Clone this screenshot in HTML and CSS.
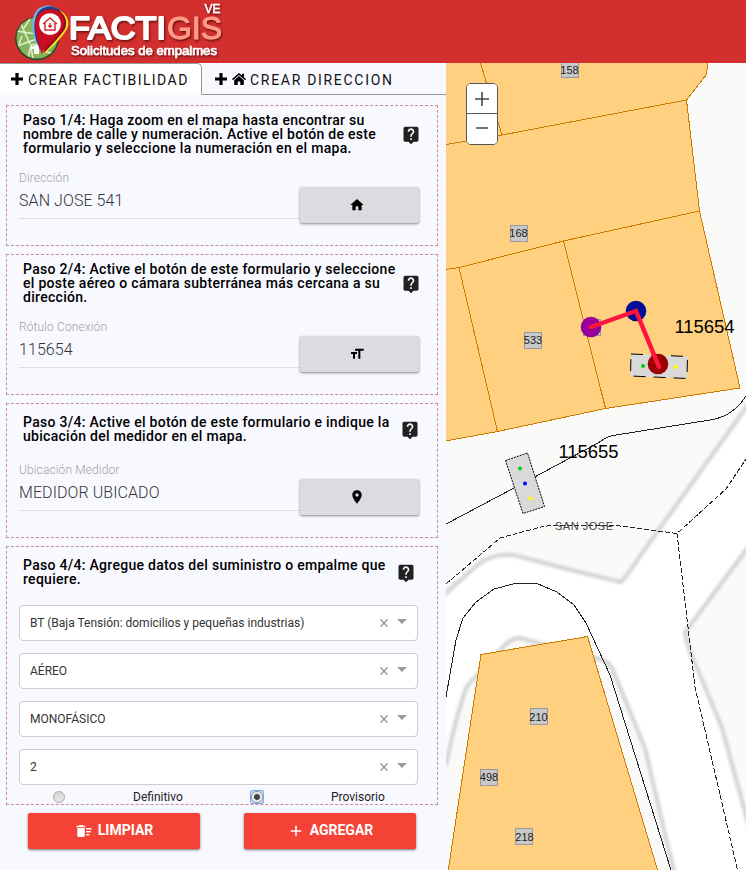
FILE: index.html
```html
<!DOCTYPE html>
<html lang="es">
<head>
<meta charset="utf-8">
<title>FACTIGIS - Solicitudes de empalmes</title>
<link rel="stylesheet" href="styles.css">
</head>
<body>
<svg class="defs" width="0" height="0" aria-hidden="true">
  <symbol id="help" viewBox="0 0 24 24"><path d="M19 2H5c-1.1 0-2 .9-2 2v14c0 1.1.9 2 2 2h4l3 3 3-3h4c1.1 0 2-.9 2-2V4c0-1.1-.9-2-2-2zm-6 16h-2v-2h2v2zm2.07-7.75l-.9.92C13.45 11.9 13 12.5 13 14h-2v-.5c0-1.1.45-2.1 1.17-2.83l1.24-1.26c.37-.36.59-.86.59-1.41 0-1.1-.9-2-2-2s-2 .9-2 2H8c0-2.21 1.79-4 4-4s4 1.79 4 4c0 .88-.36 1.68-.93 2.25z"/></symbol>
  <symbol id="plus" viewBox="0 0 12 12"><path d="M4.4 0h3.2v4.4H12v3.2H7.6V12H4.4V7.600H0V4.400h4.400z"/></symbol>
</svg>
<header class="header">
  <svg class="logo" width="240" height="63" viewBox="0 0 240 63">
    <defs>
      <filter id="shade" x="-10%" y="-10%" width="125%" height="140%"><feDropShadow dx="1" dy="1.5" stdDeviation=".8" flood-color="#400" flood-opacity=".75"/></filter>
      <clipPath id="globe"><circle cx="37" cy="38" r="20.500"/></clipPath>
    </defs>
    <circle cx="37" cy="38.500" r="22" fill="#38492a"/>
    <g clip-path="url(#globe)">
      <circle cx="37" cy="38" r="21" fill="#86b45c"/>
      <path d="M16 31l20 3M20 22l10 22M17 46l20-7M28 58l3-13 13-2M33 60l-2-14M40 50l14 4M24 28l6-9M22 36l-3 8" fill="none" stroke="#e4f0cf" stroke-width="1.500"/>
      <path d="M31 47l8-3v10h-5v-5h-3z" fill="#fff"/>
    </g>
    <path d="M37 45C31 33 30 19 37 10c6-6 16-6 22 0z" fill="#72b5e6"/>
    <path d="M43 55c9-8 19-17 24-26 4-7-1-16-8-19z" fill="#ffe91c"/>
    <path d="M40 50C33 34 33 23 37 14c6-10 19-9 24-2z" fill="#223985"/>
    <path d="M43 54c10-10 17-18 22-25 3-8 0-15-7-19z" fill="#930d1d"/>
    <path d="M41.500 54C38 42 35 32 35 24c0-18 27-20 29-3 1 11-14 20-22.500 33z" fill="#c90d22"/>
    <circle cx="50" cy="24" r="10.800" fill="#fff"/>
    <path d="M43 24l7-6 7 6M45 23v7h10v-7M48 26h4M50 23v5" fill="none" stroke="#d12c32" stroke-width="1.500"/>
    <g filter="url(#shade)">
      <text class="logo-main" x="69" y="39" textLength="97" lengthAdjust="spacingAndGlyphs">FACTI</text>
      <text class="logo-gis" x="167" y="39" textLength="55" lengthAdjust="spacingAndGlyphs">GIS</text>
      <text class="logo-sub" x="71" y="55" textLength="146" lengthAdjust="spacingAndGlyphs">Solicitudes de empalmes</text>
      <text class="logo-ve" x="204.500" y="13" textLength="16" lengthAdjust="spacingAndGlyphs">VE</text>
    </g>
  </svg>
</header>
<main class="layout">
  <div class="panel">
    <nav class="tabs">
      <div class="tab active"><svg class="plus"><use href="#plus"/></svg><span>CREAR FACTIBILIDAD</span></div>
      <div class="tab"><svg class="plus"><use href="#plus"/></svg><svg class="home" viewBox="0 0 14 12"><path d="M7 0L0 6l1 1.200L7 2.100l6 5.100L14 6 12 4.300V.8h-2v1.800zM7 3.100L2.200 7.200V12H5.700V8.400h2.600V12h3.500V7.200z"/></svg><span>CREAR DIRECCION</span></div>
    </nav>
    <section class="step">
      <div class="step-head"><h2>Paso 1/4: Haga zoom en el mapa hasta encontrar su<br>nombre de calle y numeración. Active el botón de este<br>formulario y seleccione la numeración en el mapa.</h2><svg class="help"><use href="#help"/></svg></div>
      <div class="field"><div class="input"><label>Dirección</label><div class="value">SAN JOSE 541</div></div>
        <button class="pick"><svg viewBox="0 0 24 24"><path d="M10 20v-6h4v6h5v-8h3L12 3 2 12h3v8z"/></svg></button></div>
    </section>
    <section class="step">
      <div class="step-head"><h2>Paso 2/4: Active el botón de este formulario y seleccione<br>el poste aéreo o cámara subterránea más cercana a su<br>dirección.</h2><svg class="help"><use href="#help"/></svg></div>
      <div class="field"><div class="input"><label>Rótulo Conexión</label><div class="value">115654</div></div>
        <button class="pick"><svg viewBox="0 0 24 24"><path d="M9 4v3h5v12h3V7h5V4H9zm-6 8h3v7h3v-7h3V9H3v3z"/></svg></button></div>
    </section>
    <section class="step step3">
      <div class="step-head"><h2>Paso 3/4: Active el botón de este formulario e indique la<br>ubicación del medidor en el mapa.</h2><svg class="help h3"><use href="#help"/></svg></div>
      <div class="field"><div class="input"><label>Ubicación Medidor</label><div class="value">MEDIDOR UBICADO</div></div>
        <button class="pick"><svg viewBox="0 0 24 24"><path d="M12 2C8.130 2 5 5.130 5 9c0 5.250 7 13 7 13s7-7.750 7-13c0-3.870-3.130-7-7-7zm0 9.500c-1.380 0-2.500-1.120-2.500-2.500s1.120-2.500 2.500-2.500 2.500 1.120 2.500 2.500-1.120 2.500-2.500 2.500z"/></svg></button></div>
    </section>
    <section class="step step4">
      <div class="step-head"><h2>Paso 4/4: Agregue datos del suministro o empalme que<br>requiere.</h2><svg class="help h4"><use href="#help"/></svg></div>
      <div class="selects">
        <div class="select"><span>BT (Baja Tensión: domicilios y pequeñas industrias)</span><svg class="clear" viewBox="0 0 8 8"><path d="M.5.5l7 7M7.500.5l-7 7"/></svg><i class="caret"></i></div>
        <div class="select"><span>AÉREO</span><svg class="clear" viewBox="0 0 8 8"><path d="M.5.5l7 7M7.500.5l-7 7"/></svg><i class="caret"></i></div>
        <div class="select"><span>MONOFÁSICO</span><svg class="clear" viewBox="0 0 8 8"><path d="M.5.5l7 7M7.500.5l-7 7"/></svg><i class="caret"></i></div>
        <div class="select"><span>2</span><svg class="clear" viewBox="0 0 8 8"><path d="M.5.5l7 7M7.500.5l-7 7"/></svg><i class="caret"></i></div>
      </div>
      <div class="radios"><i class="radio"></i><span class="opt1">Definitivo</span><i class="radio on"></i><span>Provisorio</span></div>
    </section>
    <div class="actions">
      <button class="action"><svg viewBox="0 0 24 24"><path d="M15 16h4v2h-4zm0-8h7v2h-7zm0 4h6v2h-6zM3 18c0 1.100.9 2 2 2h6c1.100 0 2-.9 2-2V8H3v10zM14 5h-3l-1-1H6L5 5H2v2h12z"/></svg><span>LIMPIAR</span></button>
      <button class="action"><svg viewBox="0 0 24 24"><path d="M19 13h-6v6h-2v-6H5v-2h6V5h2v6h6v2z"/></svg><span>AGREGAR</span></button>
    </div>
  </div>
  <div class="map">
    <svg class="canvas" width="300" height="807" viewBox="446 63 300 807">
      <defs><filter id="soft"><feGaussianBlur stdDeviation="1.500"/></filter></defs>
      <rect x="446" y="63" width="300" height="807" fill="#fafaf8"/>
      <path d="M446 597L480 563Q494 553 514 555L575 571 621 582Q628 575 640 556L746 408V870H675L664 830 645 748 612 668Q608 661 600 659L520 638Q513 637 505 645L467 686Q456 715 446 765z" fill="#fff"/>
      <path d="M686 632L746 545V822L722 728 697 668z" fill="#fafaf8"/>
      <path class="edge" d="M440 598L480 563Q494 553 514 555L575 571 621 582Q628 575 640 556L750 402M750 545L685 632Q686 645 697 668L722 728 750 830M675 875L664 830 645 748 612 668Q608 661 600 659L520 638Q513 637 505 645L467 686Q456 715 446 765" filter="url(#soft)"/>
      <path class="parcel" d="M440 55H709L706.500 74.500 686.500 100 699.500 211 740 388 605.500 408.500 497.500 431.500 440 442z"/>
      <path class="parcel" d="M481 654.500L587.500 636.500 662 885H446z"/>
      <path class="lot" d="M480.500 63L502 135M440 145.500L502 135 686.500 100M446 269.500L459 267.500 563.500 241 699.500 211M459 267.500L497.500 431.500M563.500 241L605.500 408.500"/>
      <path class="road" d="M446 524L514 488 570 458 598 443Q608 436 613 435.500L713 419.500Q738 414 749 390M446 697L456 640 463 618 476 602 494 589 515 583.500H537L557 592 574 605 586 623 610 675 671 870"/>
      <path class="road dash" d="M446 584L500 538 543 526.500Q560 524 620 526L677 533.500 726 489 746 459M677 533.500L695 687 737.500 870"/>
      <path d="M505.500 460.500L527.500 453 544.500 506.500 523 513.500z" class="vault tight"/>
      <path d="M631 354L687.500 356.500 687 378.500 630.500 376z" class="vault"/>
      <circle cx="520" cy="468.500" r="2" fill="#0c1"/><circle cx="525" cy="483.500" r="2" fill="#00f"/><circle cx="530.500" cy="498.500" r="2" fill="#ff0"/>
      <circle cx="643" cy="366" r="2" fill="#0c1"/><circle cx="675.500" cy="367" r="2" fill="#ff0"/>
      <g class="plot">
        <rect x="561" y="61" width="17" height="16"/><rect x="510" y="225" width="17" height="16"/><rect x="524" y="332" width="17" height="16"/><rect x="583" y="319" width="17" height="16"/><rect x="530" y="708" width="17" height="16"/><rect x="480" y="769" width="17" height="16"/><rect x="515" y="828" width="17" height="16"/>
      </g>
      <g class="num">
        <text x="569.500" y="74">158</text><text x="518.500" y="237">168</text><text x="533" y="344">533</text><text x="538.500" y="721">210</text><text x="489" y="781">498</text><text x="524.500" y="841">218</text>
      </g>
      <text class="street" x="555" y="530" textLength="58">SAN JOSE</text>
      <text class="pole" x="674.500" y="333" textLength="60">115654</text>
      <text class="pole" x="558.500" y="458" textLength="60">115655</text>
      <circle cx="591" cy="327" r="10.300" fill="#909"/><circle cx="636" cy="311" r="10.300" fill="#000d96"/><circle cx="658" cy="364" r="10.300" fill="#9c0000"/>
      <path d="M591 327L636 311 659 367" class="link"/>
    </svg>
    <div class="zoom"><button><svg viewBox="0 0 14 14"><path d="M7 0v14M0 7h14"/></svg></button><button><svg viewBox="0 0 14 14"><path d="M1 7h12"/></svg></button></div>
  </div>
</main>
</body>
</html>
```
FILE: styles.css
```css
* { box-sizing: border-box; }
body { margin: 0; width: 746px; height: 870px; overflow: hidden; font-family: Roboto, "Liberation Sans", sans-serif; background: #f8f9ff; }
.defs { position: absolute; }
button { border: 0; padding: 0; margin: 0; font: inherit; display: flex; align-items: center; justify-content: center; }
.header { height: 63px; background: #d32f2f; }
.logo { display: block; }
.logo text { font-family: "Liberation Sans", sans-serif; fill: #fff; stroke-linejoin: round; }
.logo .logo-main { font-size: 31.5px; stroke: #fff; stroke-width: 2px; }
.logo .logo-gis { font-size: 31.5px; fill: #ff9b85; stroke: #ff9b85; stroke-width: 1px; }
.logo .logo-sub { font-size: 12.5px; stroke: #fff; stroke-width: .6px; }
.logo .logo-ve { font-size: 12px; stroke: #fff; stroke-width: .4px; }
.layout { display: flex; height: 807px; }
.panel { width: 446px; }
.map { width: 300px; position: relative; overflow: hidden; }
.canvas { display: block; }

.tabs { display: flex; height: 32px; margin-bottom: 10px; }
.tab { display: flex; align-items: center; padding: 2px 0 0 13px; flex: 1; border-bottom: 1px solid #999; font-size: 14px; letter-spacing: 1.7px; color: #111; white-space: nowrap; }
.tab.active { flex: 0 0 202px; padding-left: 11px; background: #fff; border: 1px solid #999; border-left: 0; border-bottom-color: #fff; border-radius: 0 5px 0 0; padding-top: 1px; letter-spacing: 1.44px; }
.plus { width: 12px; height: 12px; margin: -2px 5px 0 0; fill: #000; }
.home { width: 14px; height: 12px; margin: -1px 4px 0 0; fill: #000; }

.step { width: 432px; height: 141px; margin: 0 0 8px 6px; border: 1px dashed #c98c91; padding: 7px 0 0 12px; }
.step3 { height: 135px; padding-top: 11px; }
.step4 { height: 259px; padding-top: 11px; }
.step-head { display: flex; height: 53px; }
.step3 .step-head { height: 43px; }
.step4 .step-head { height: 47px; }
h2 { margin: 0 0 0 4px; width: 378px; font-size: 14px; line-height: 14px; font-weight: 500; letter-spacing: .29px; white-space: nowrap; color: #000; }
.help { flex: none; width: 20px; height: 20px; fill: #212121; margin-top: 12px; }
.h3 { margin: 5px 0 0 -1px; }
.h4 { margin: 5px 0 0 -5px; }
.field { display: flex; align-items: flex-start; }
.input { width: 281px; height: 53px; border-bottom: 1px dotted #c8c8cc; }
label { display: block; font-size: 12px; line-height: 14px; padding-top: 5px; font-weight: 300; letter-spacing: .12px; color: #a0a0a8; }
.value { font-size: 16px; line-height: 20px; margin-top: 6px; font-weight: 300; letter-spacing: .08px; color: #333339; }
.pick { width: 119px; height: 36px; margin-top: 21px; background: #dcdbe0; border-radius: 2px; box-shadow: 0 1px 3px rgba(0,0,0,.3), 0 1px 2px rgba(0,0,0,.2); }
.pick svg { width: 16px; height: 16px; margin-left: -6px; }

.selects { display: grid; gap: 12px; width: 399px; }
.select { display: flex; align-items: center; height: 36px; background: #fff; border: 1px solid #ccc; border-radius: 4px; padding: 0 10px; font-size: 12px; color: #333; }
.select span { flex: 1; }
.clear { width: 8px; height: 8px; margin-right: 9px; stroke: #999; stroke-width: 1.5; }
.caret { border: 5px solid transparent; border-top-color: #999; border-bottom: 0; margin-top: -3px; }
.radios { display: flex; align-items: center; height: 14px; margin-top: 5px; padding-left: 34px; font-size: 12px; color: #222; }
.radio { width: 12px; height: 12px; border: 1px solid #aaa; border-radius: 50%; background: linear-gradient(#d4d4d4, #e8e8e8); }
.radios span { margin-left: 68px; }
.radios .opt1 { width: 117px; }
.radio.on { width: 14px; height: 14px; border: 1px solid #7eaaf0; border-radius: 2px; background: radial-gradient(circle, #444 0 2.5px, #e4e4e4 3.5px 5px, #999 5.5px, #c5dafa 6.5px); }
.radio.on + span { margin-left: 67px; }

.actions { display: flex; gap: 44px; padding-left: 28px; }
.action { width: 172px; height: 36px; border-radius: 2px; background: #f44336; color: #fff; font-size: 14px; font-weight: 700; box-shadow: 0 1px 3px rgba(0,0,0,.35), 0 1px 2px rgba(0,0,0,.25); }
.action svg { width: 18px; height: 18px; margin-right: 5px; fill: #fff; }
.action span { margin-top: -2px; }

.edge { fill: none; stroke: #d2d2d2; stroke-width: 4; }
.parcel { fill: #ffd07f; stroke: #cc7a00; shape-rendering: crispEdges; }
.lot { fill: none; stroke: #cc7a00; shape-rendering: crispEdges; }
.road { fill: none; stroke: #222; shape-rendering: crispEdges; }
.dash { stroke-dasharray: 5 2; }
.vault { fill: #d9d9d9; stroke: #000; stroke-dasharray: 12 8; }
.tight { stroke-dasharray: 2 1; }
.plot { fill: #c8c8c8; stroke: #999; shape-rendering: crispEdges; }
.num text { font: 11px "Liberation Sans", sans-serif; text-anchor: middle; fill: #222; }
.street { font: 11px "Liberation Sans", sans-serif; fill: #444; }
.pole { font: 18.5px "Liberation Sans", sans-serif; fill: #000; }
.link { fill: none; stroke: #ff143c; stroke-width: 4.5; stroke-linecap: round; }
.zoom { position: absolute; left: 20px; top: 20px; width: 32px; height: 62px; background: #fff; border: 1px solid #57585a; border-radius: 5px; overflow: hidden; }
.zoom button { width: 30px; height: 29px; background: #fff; }
.zoom button + button { height: 31px; border-top: 1px solid #57585a; }
.zoom svg { width: 14px; height: 14px; stroke: #444; stroke-width: 1.6; }
.zoom button + button svg { margin-top: -2px; }
```
